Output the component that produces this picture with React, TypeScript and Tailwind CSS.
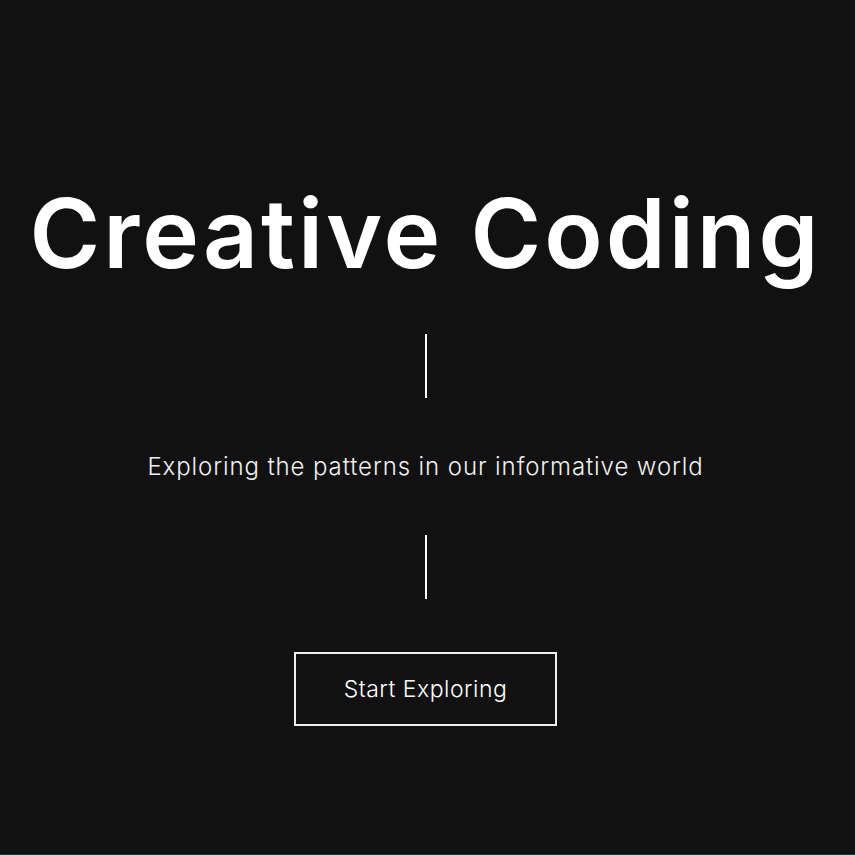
import React from "react";

const Divider: React.FC = () => <div className="w-[2px] h-[64px] bg-white" />;

export default function App() {
  return (
    <div className="h-screen bg-[#111111] text-white border-b border-[#1e3a3a] font-['Inter',sans-serif] overflow-hidden">
      <div className="flex flex-col items-center gap-[53px] pt-[185px] pr-1">
        <h1 className="text-[96px] leading-[96px] font-semibold tracking-[3px] whitespace-nowrap">
          Creative Coding
        </h1>
        <Divider />
        <p className="text-[24px] leading-[31px] font-light tracking-[0.9px] text-[#f0f0f0]">
          Exploring the patterns in our informative world
        </p>
        <Divider />
        <button className="w-[263px] h-[74px] border-2 border-[#eeeeee] flex items-center justify-center text-[23px] font-light tracking-[0.5px]">
          Start Exploring
        </button>
      </div>
    </div>
  );
}
